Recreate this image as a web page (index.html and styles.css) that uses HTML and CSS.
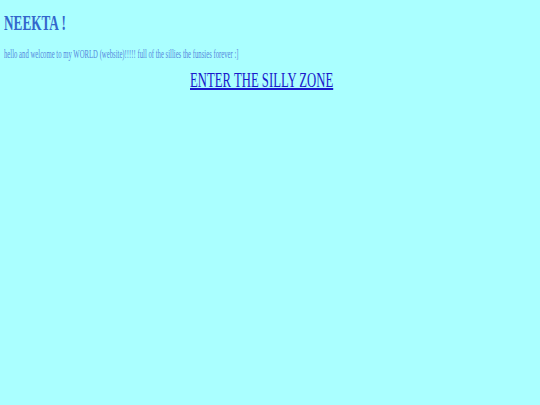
FILE: index.html
```html
<!DOCTYPE html>
<html>
<head>
<meta charset="utf-8">
<link rel="stylesheet" href="styles.css">
</head>
<body>
<h1 class="title"><span class="squeeze squeeze-title">NEEKTA !</span></h1>
<p class="intro"><span class="squeeze squeeze-intro">hello and welcome to my WORLD (website)!!!!! full of the sillies the funsies forever :]</span></p>
<div class="enter"><a class="enter-link squeeze squeeze-link" href="#">ENTER THE SILLY ZONE</a></div>
</body>
</html>
```
FILE: styles.css
```css
html, body {
  background: #aaffff;
}
body {
  margin: 0;
  padding: 0 4px;
  font-family: "Liberation Serif", serif;
}
.squeeze {
  display: inline-block;
  white-space: nowrap;
  transform-origin: left center;
}
.title {
  font-size: 21px;
  line-height: 24px;
  color: #3366cc;
  margin: 11px 0 0;
}
.squeeze-title {
  transform: scaleX(0.63);
}
.intro {
  font-size: 13px;
  line-height: 15px;
  color: #5588dd;
  margin: 11px 0 0;
}
.squeeze-intro {
  transform: scaleX(0.516);
}
.enter {
  margin: 8px 0 0 186px;
  line-height: 22px;
}
.enter-link {
  font-size: 20px;
  color: #1a1acc;
}
.squeeze-link {
  transform: scaleX(0.636);
}
```
